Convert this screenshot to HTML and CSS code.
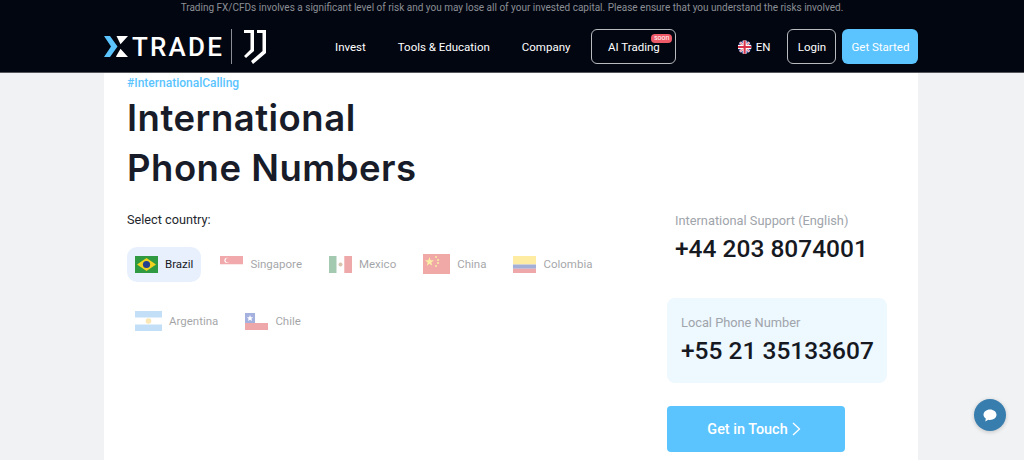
FILE: index.html
```html
<!DOCTYPE html>
<html lang="en">
<head>
    <meta charset="UTF-8">
    <meta name="viewport" content="width=device-width, initial-scale=1.0">
    <title>International Phone Numbers</title>
    <link rel="stylesheet" href="styles.css">
</head>
<body>
    <header class="site-header">
        <p class="risk-note">Trading FX/CFDs involves a significant level of risk and you may lose all of your invested capital. Please ensure that you understand the risks involved.</p>
        <div class="nav-row">
            <a class="logo" href="#">
                <svg class="logo-x" width="24" height="21" viewBox="0 0 24 21"><path d="M0 0h6l7.500 10.500L6 21H0l7-10.500z" fill="#5bc4ff"/><path d="M12.500 0H24l-7.500 8.300zM16.500 12.700L24 21H12.500l-.5-.500z" fill="#fff"/></svg>
                <span class="logo-text">TRADE</span>
                <span class="logo-divider"></span>
                <svg class="logo-jj" width="24" height="36" viewBox="0 0 24 36"><path d="M1 1h10v21l-8 7-2-2 6.500-6.500V4H1zM14 1h9v23L10 35l-2-3 11.500-10V4H14z" fill="#fff"/></svg>
            </a>
            <nav class="main-nav">
                <a href="#">Invest</a>
                <a href="#">Tools &amp; Education</a>
                <a href="#">Company</a>
            </nav>
            <a class="ai-btn" href="#">AI Trading<span class="soon">soon</span></a>
            <div class="lang">
                <svg width="14" height="14" viewBox="0 0 14 14"><circle cx="7" cy="7" r="7" fill="#3b4f9c"/><path d="M2 2l10 10M12 2L2 12" stroke="#fff" stroke-width="2.400"/><path d="M2 2l10 10M12 2L2 12" stroke="#d8334a" stroke-width="1"/><path d="M7 0v14M0 7h14" stroke="#fff" stroke-width="4"/><path d="M7 0v14M0 7h14" stroke="#d8334a" stroke-width="2.200"/></svg>
                <span>EN</span>
            </div>
            <a class="login-btn" href="#">Login</a>
            <a class="start-btn" href="#">Get Started</a>
        </div>
    </header>

    <main class="card">
        <div class="tag">#InternationalCalling</div>
        <h1>International<br>Phone Numbers</h1>
        <div class="columns">
            <section class="countries">
                <p class="select-label">Select country:</p>
                <div class="chips">
                    <div class="chip active">
                        <svg width="23" height="17" viewBox="0 0 23 17"><rect width="23" height="17" fill="#2f9a41"/><path d="M11.500 2L21 8.500 11.500 15 2 8.500z" fill="#f2d21f"/><circle cx="11.500" cy="8.500" r="3.600" fill="#24418f"/></svg>
                        <span>Brazil</span>
                    </div>
                    <div class="chip">
                        <svg width="23" height="17" viewBox="0 0 23 17"><rect width="23" height="8.500" fill="#df2a33"/><rect y="8.500" width="23" height="8.500" fill="#fff"/><circle cx="7" cy="4.300" r="2.600" fill="#fff"/><circle cx="8" cy="4.300" r="2.400" fill="#df2a33"/></svg>
                        <span>Singapore</span>
                    </div>
                    <div class="chip">
                        <svg width="23" height="17" viewBox="0 0 23 17"><rect width="7.700" height="17" fill="#1f7a3f"/><rect x="7.700" width="7.600" height="17" fill="#fff"/><rect x="15.300" width="7.700" height="17" fill="#d9272e"/><circle cx="11.500" cy="8.500" r="2" fill="#a0703a"/></svg>
                        <span>Mexico</span>
                    </div>
                    <div class="chip">
                        <svg width="27" height="20" viewBox="0 0 27 20"><rect width="27" height="20" fill="#dc2a25"/><path d="M6.500 3l1.100 3.300H11L8.300 8.400l1 3.300-2.800-2-2.800 2 1-3.300L2 6.300h3.400z" fill="#f6d523"/><circle cx="13" cy="3" r="1" fill="#f6d523"/><circle cx="15" cy="6" r="1" fill="#f6d523"/><circle cx="15" cy="9" r="1" fill="#f6d523"/><circle cx="13" cy="12" r="1" fill="#f6d523"/></svg>
                        <span>China</span>
                    </div>
                    <div class="chip">
                        <svg width="23" height="17" viewBox="0 0 23 17"><rect width="23" height="8.500" fill="#fcd116"/><rect y="8.500" width="23" height="4.250" fill="#1f3a9e"/><rect y="12.750" width="23" height="4.250" fill="#d9272e"/></svg>
                        <span>Colombia</span>
                    </div>
                    <div class="chip">
                        <svg width="27" height="20" viewBox="0 0 27 20"><rect width="27" height="20" fill="#fff"/><rect width="27" height="6.500" fill="#6cb1f0"/><rect y="13.500" width="27" height="6.500" fill="#6cb1f0"/><circle cx="13.500" cy="10" r="2.800" fill="#f4c545"/></svg>
                        <span>Argentina</span>
                    </div>
                    <div class="chip">
                        <svg width="23" height="17" viewBox="0 0 23 17"><rect width="23" height="10" fill="#fff"/><rect y="10" width="23" height="7" fill="#d9272e"/><rect width="10" height="10" fill="#1f3fb0"/><path d="M5 2l.9 2.200h2.300L6.400 5.700l.7 2.300L5 6.700 2.900 8l.7-2.300L1.800 4.200h2.300z" fill="#fff"/></svg>
                        <span>Chile</span>
                    </div>
                </div>
            </section>
            <aside class="contact">
                <div class="support">
                    <p class="phone-label">International Support (English)</p>
                    <p class="phone">+44 203 8074001</p>
                </div>
                <div class="local-box">
                    <p class="phone-label">Local Phone Number</p>
                    <p class="phone">+55 21 35133607</p>
                </div>
                <a class="touch-btn" href="#">Get in Touch
                    <svg width="9" height="14" viewBox="0 0 9 14"><path d="M1 1l6.500 6L1 13" fill="none" stroke="#fff" stroke-width="1.300"/></svg>
                </a>
            </aside>
        </div>
    </main>

    <button class="chat-btn" aria-label="Chat">
        <svg width="14" height="13" viewBox="0 0 14 13"><path d="M7 0.500c3.600 0 6.500 2.300 6.500 5.200S10.600 10.900 7 10.900c-.6 0-1.200-.1-1.700-.2L2.300 12.500l.5-3C1.300 8.500.5 7.200.5 5.700.5 2.800 3.400.5 7 .5z" fill="#fff"/></svg>
    </button>
</body>
</html>
```

FILE: styles.css
```css
* {
    margin: 0;
    padding: 0;
    box-sizing: border-box;
}

html, body {
    height: 460px;
    overflow: hidden;
}

body {
    background-color: #f1f2f4;
    font-family: 'Roboto', 'Liberation Sans', sans-serif;
    color: #16191f;
}

a {
    text-decoration: none;
    color: inherit;
}

.site-header {
    height: 73px;
    background-color: #020611;
    border-bottom: 1px solid #55575c;
    color: #fff;
}

.risk-note {
    height: 21px;
    padding-top: 1px;
    line-height: 14px;
    text-align: center;
    font-size: 10px;
    color: #8b8e94;
}

.nav-row {
    display: flex;
    align-items: center;
    height: 51px;
    padding-left: 104px;
    font-size: 11.500px;
    white-space: nowrap;
}

.logo {
    display: flex;
    align-items: center;
    flex: none;
    width: 231px;
}

.logo-x {
    flex: none;
    margin-right: 4px;
}

.logo-text {
    flex: none;
    width: 90px;
    font-size: 26px;
    font-weight: 500;
    letter-spacing: 2.2px;
}

.logo-divider {
    flex: none;
    width: 1px;
    height: 35px;
    margin: 0 11px 0 9px;
    background-color: #8b8e94;
}

.logo-jj {
    flex: none;
}

.main-nav {
    display: flex;
    flex: none;
    gap: 32px;
}

.ai-btn {
    position: relative;
    display: flex;
    align-items: center;
    justify-content: center;
    flex: none;
    width: 85px;
    height: 35px;
    margin-left: 21px;
    border: 1px solid #b9bbbf;
    border-radius: 6px;
}

.soon {
    position: absolute;
    top: 4px;
    right: 3px;
    padding: 0 3px;
    height: 9px;
    line-height: 9px;
    border-radius: 4px;
    background-color: #ee5a68;
    font-size: 7px;
}

.lang {
    display: flex;
    align-items: center;
    gap: 4px;
    flex: none;
    width: 32px;
    margin-left: 62px;
}

.login-btn {
    display: flex;
    align-items: center;
    justify-content: center;
    flex: none;
    width: 49px;
    height: 35px;
    margin-left: 17px;
    border: 1px solid #b9bbbf;
    border-radius: 6px;
}

.start-btn {
    display: flex;
    align-items: center;
    justify-content: center;
    flex: none;
    width: 76px;
    height: 35px;
    margin-left: 6px;
    border-radius: 6px;
    background-color: #5bc4ff;
}

.card {
    width: 814px;
    height: 387px;
    margin-left: 104px;
    padding: 3px 31px 0 23px;
    background-color: #fff;
}

.tag {
    font-size: 12px;
    font-weight: 500;
    line-height: 14px;
    color: #5bc4ff;
}

h1 {
    margin-top: 3px;
    font-family: 'Inter', 'Liberation Sans', sans-serif;
    font-size: 36.500px;
    font-weight: 600;
    line-height: 50px;
    letter-spacing: 0.5px;
    color: #181b28;
}

.columns {
    display: flex;
    margin-top: 19px;
}

.countries {
    width: 540px;
}

.select-label {
    margin-top: -1px;
    font-size: 12.700px;
    line-height: 18px;
    color: #23262d;
}

.chips {
    display: flex;
    flex-wrap: wrap;
    gap: 22px 11px;
    margin-top: 18px;
}

.chip {
    display: flex;
    align-items: center;
    gap: 7px;
    height: 35px;
    padding: 0 8px 1px;
    border-radius: 10px;
    font-size: 11.500px;
    opacity: 0.4;
}

.chip.active {
    background-color: #e9f0fd;
    opacity: 1;
}

.contact {
    display: flex;
    flex-direction: column;
}

.support {
    padding-left: 8px;
}

.phone-label {
    font-size: 12.800px;
    line-height: 18px;
    color: #a0a4ab;
}

.phone {
    margin-top: 3px;
    font-size: 24.500px;
    font-weight: 500;
    line-height: 32px;
    color: #16191f;
}

.local-box {
    width: 220px;
    height: 85px;
    margin-top: 33px;
    padding: 16px 0 0 14px;
    border-radius: 8px;
    background-color: #edf8ff;
}

.touch-btn {
    display: flex;
    align-items: center;
    justify-content: center;
    gap: 4px;
    width: 178px;
    height: 46px;
    margin-top: 23px;
    padding-right: 4px;
    border-radius: 4px;
    background-color: #5bc4ff;
    color: #fff;
    font-size: 14.400px;
    font-weight: 500;
}

.chat-btn {
    position: fixed;
    left: 974px;
    top: 399px;
    width: 32px;
    height: 32px;
    display: flex;
    align-items: center;
    justify-content: center;
    border: none;
    border-radius: 50%;
    background-color: #377dae;
    box-shadow: 0 1px 4px rgba(0, 0, 0, 0.2);
}
```
